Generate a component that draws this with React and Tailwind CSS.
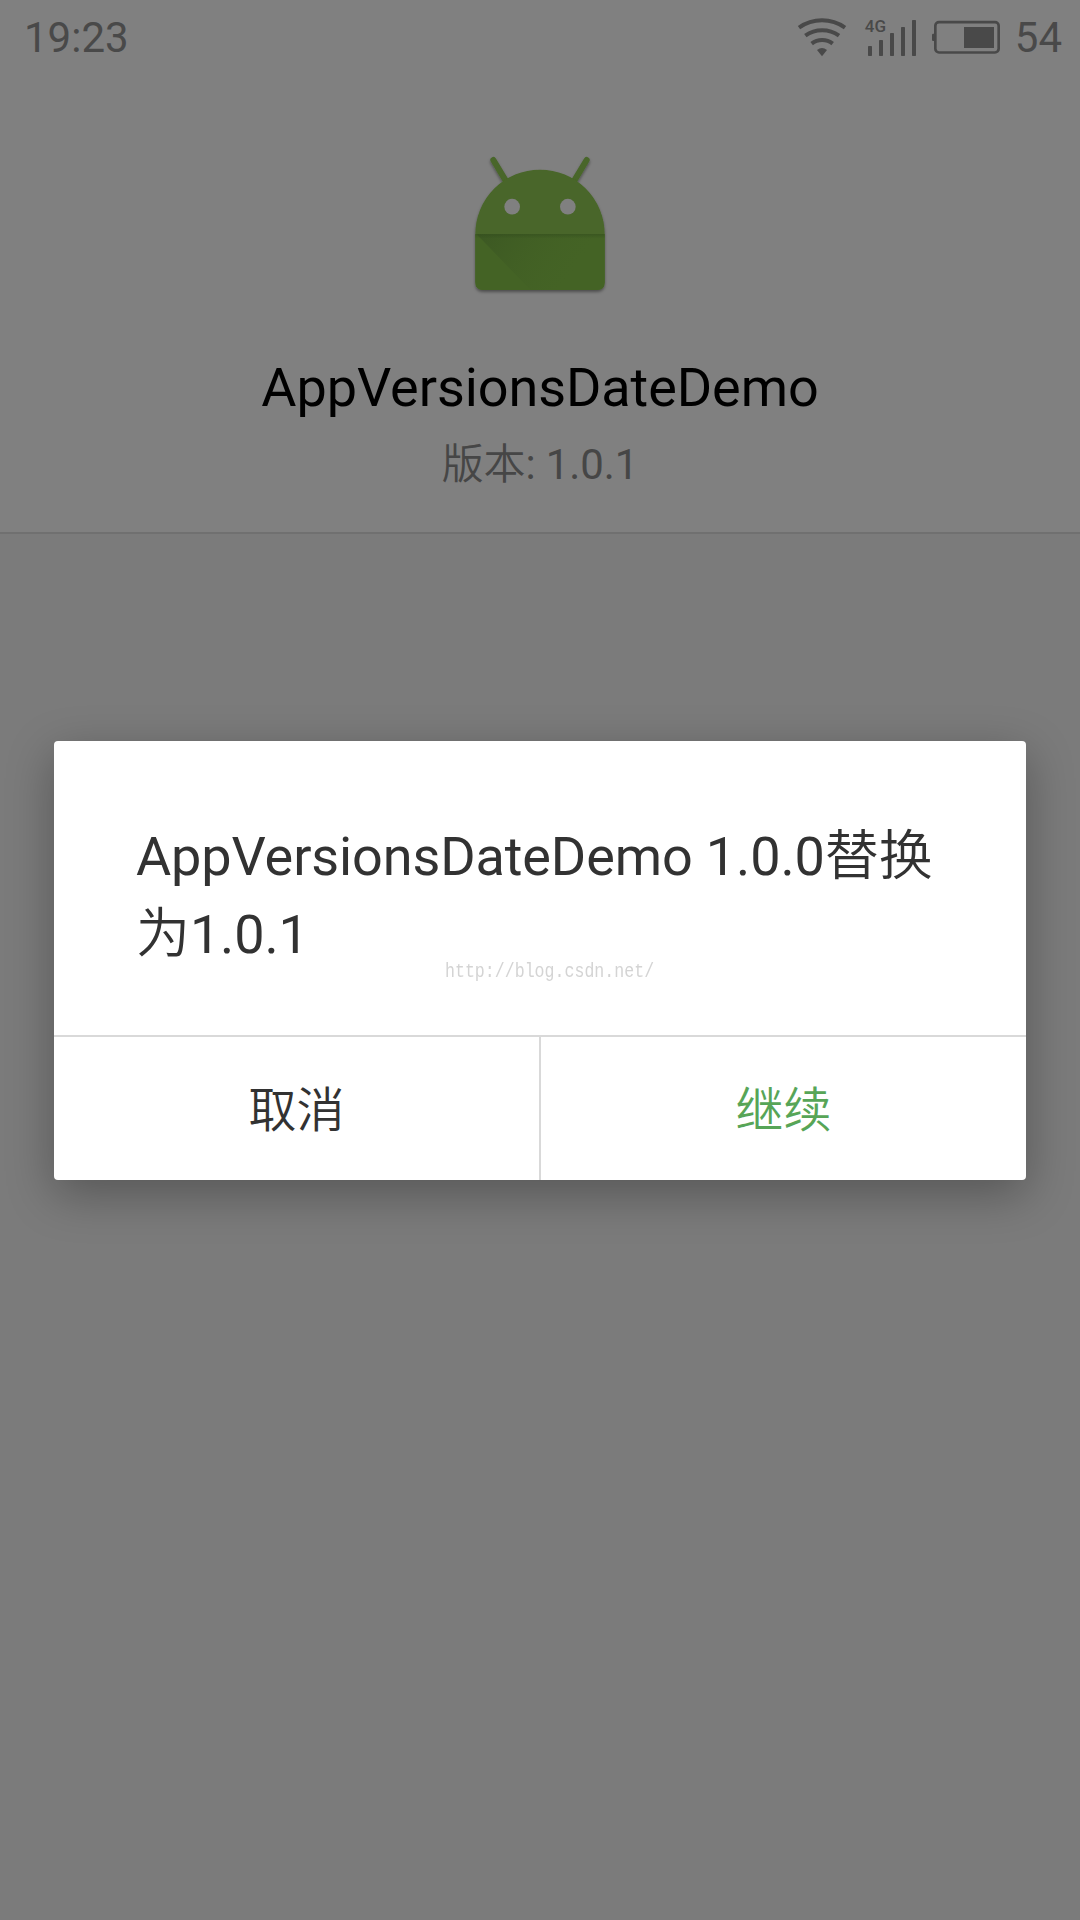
const WifiIcon = () => (
  <svg width="50" height="42" viewBox="52 48 150 126" fill="none" stroke="#494949">
    <path d="M58 83 A119 119 0 0 1 196 83" strokeWidth="12" />
    <path d="M77 107 A86 86 0 0 1 178 107" strokeWidth="12" />
    <path d="M96 131 A50 50 0 0 1 159 131" strokeWidth="12" />
    <path d="M112 150 Q127 138 142 150 L127 169 Z" fill="#494949" stroke="none" />
  </svg>
);

const SignalIcon = () => (
  <svg width="52" height="42" viewBox="255 48 156 126" fill="#494949">
    <rect x="264" y="138" width="12" height="30" rx="2" />
    <rect x="297" y="120" width="12" height="48" rx="2" />
    <rect x="330" y="99" width="12" height="69" rx="2" />
    <rect x="363" y="81" width="12" height="87" rx="2" />
    <rect x="396" y="60" width="12" height="108" rx="2" />
  </svg>
);

const BatteryIcon = () => (
  <svg width="68" height="42" viewBox="456 48 204 126" fill="#494949">
    <rect x="466" y="66.5" width="190" height="91" rx="11" fill="none" stroke="#494949" strokeWidth="8" />
    <path d="M463 101 h-4 q-3 0 -3 4 v14 q0 4 3 4 h4 Z" />
    <rect x="552" y="81" width="90" height="63" />
  </svg>
);

const AndroidLogo = () => (
  <svg width="180" height="170" viewBox="0 0 540 510">
    <defs>
      <linearGradient id="fold" x1="90" y1="282" x2="330" y2="450" gradientUnits="userSpaceOnUse">
        <stop offset="0" stopColor="#3c5823" />
        <stop offset="1" stopColor="#446325" stopOpacity="0.2" />
      </linearGradient>
      <linearGradient id="crease" x1="0" y1="0" x2="0" y2="1">
        <stop offset="0" stopColor="#304a1c" stopOpacity="0.5" />
        <stop offset="1" stopColor="#304a1c" stopOpacity="0" />
      </linearGradient>
      <filter id="soft" x="-10%" y="-10%" width="120%" height="125%">
        <feDropShadow dx="0" dy="6" stdDeviation="5" floodColor="#000" floodOpacity="0.4" />
      </filter>
    </defs>
    <g filter="url(#soft)">
      <path d="M130 60 L172 130 M410 60 L368 130" stroke="#486629" strokeWidth="18" strokeLinecap="round" />
      <path
        fill="#486629"
        d="M76 283 A194 194 0 0 1 464 283 V426 Q464 450 440 450 H100 Q76 450 76 426 Z"
      />
    </g>
    <circle cx="186.5" cy="200" r="23.5" fill="#808080" />
    <circle cx="353.5" cy="200" r="23.5" fill="#808080" />
    <path d="M76 283 H464 V426 Q464 450 440 450 H100 Q76 450 76 426 Z" fill="#446325" />
    <path d="M80 283 H464 V426 Q464 450 440 450 H242 Z" fill="url(#fold)" />
    <rect x="76" y="282" width="388" height="14" fill="url(#crease)" />
  </svg>
);

const StatusBar = () => (
  <div className="flex h-[74px] items-center justify-between pl-6 pr-[18px] text-[42px] text-[#494949]">
    <span>19:23</span>
    <div className="flex items-center">
      <WifiIcon />
      <div className="relative ml-[18px]">
        <SignalIcon />
        <span className="absolute left-0 top-[2px] text-[17px] font-medium leading-[17px]">4G</span>
      </div>
      <div className="ml-[15px]">
        <BatteryIcon />
      </div>
      <span className="ml-[15px]">54</span>
    </div>
  </div>
);

const UpdateDialog = () => (
  <div className="absolute inset-0 flex items-start justify-center pt-[741px]">
    <div className="relative flex h-[439px] w-[972px] flex-col rounded-[4px] bg-white text-[#323232] shadow-[0_14px_48px_rgba(0,0,0,0.3)]">
      <p className="h-[294px] px-[82px] pt-[77px] text-[54px] leading-[78px] tracking-[-0.12px]">
        AppVersionsDateDemo 1.0.0<span className="font-[350]">替换</span>
        <br />
        <span className="font-[350]">为</span>1.0.1
      </p>
      <div className="flex flex-1 border-t-2 border-[#d9d9d9] text-[48px] font-[350]">
        <button className="flex-1 border-r-2 border-[#d9d9d9] pt-1">取消</button>
        <button className="flex-1 pt-1 text-[#57a557]">继续</button>
      </div>
      <span className="absolute left-[391px] top-[221px] scale-y-[1.2] font-['Liberation_Mono',monospace] text-[16.6px] leading-5 text-[#d4d4d4]">
        http://blog.csdn.net/
      </span>
    </div>
  </div>
);

const App = () => {
  return (
    <div className="relative h-[1920px] w-[1080px] overflow-hidden bg-[#7b7b7b] font-[Roboto,'Noto_Sans_CJK_SC',sans-serif]">
      <div className="flex h-[534px] flex-col border-b-2 border-[#707070] bg-[#808080]">
        <StatusBar />
        <div className="flex flex-col items-center pt-[66px]">
          <AndroidLogo />
          <h1 className="mt-[46px] text-[54px] leading-[64px] tracking-[-0.08px] text-black">AppVersionsDateDemo</h1>
          <p className="mt-[15px] text-[42px] leading-[60px] tracking-[-0.1px] text-[#464646]">
            <span className="font-[350]">版本</span>: 1.0.1
          </p>
        </div>
      </div>
      <UpdateDialog />
    </div>
  );
};

export default App;
